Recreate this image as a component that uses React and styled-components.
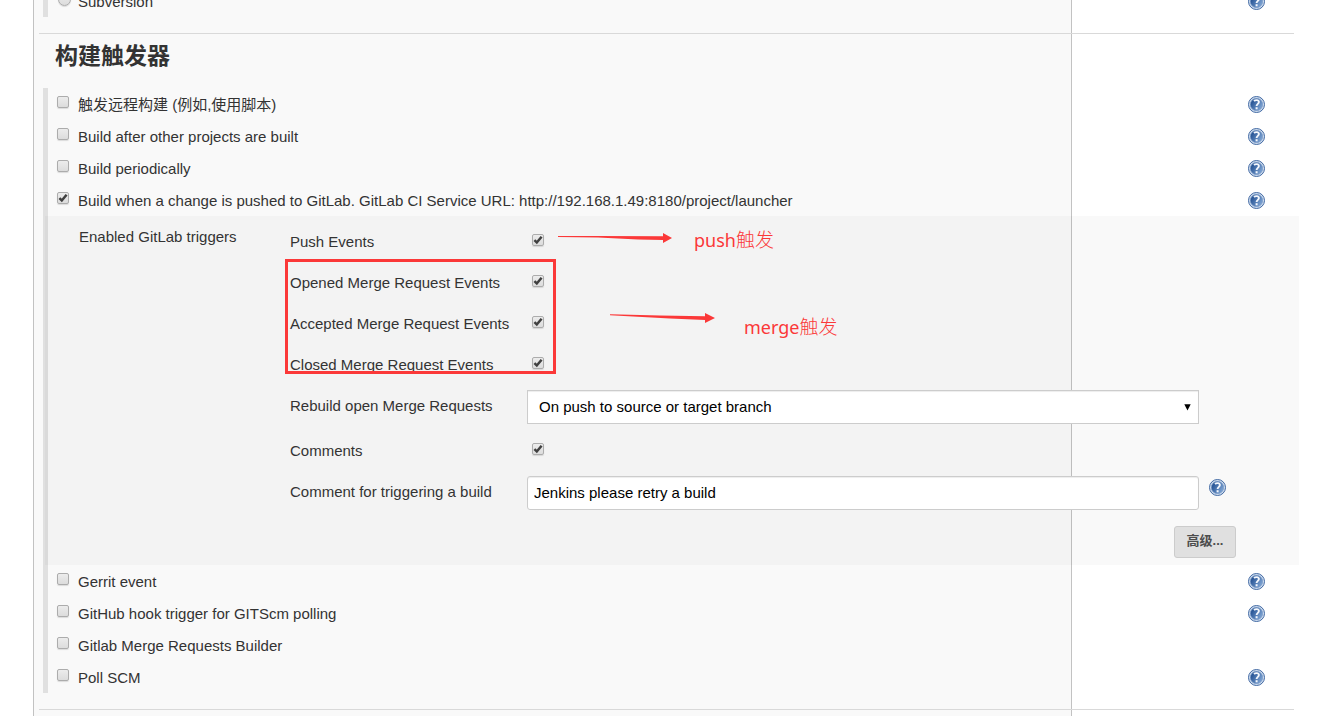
import React from "react";
import styled, { createGlobalStyle, css } from "styled-components";

const GlobalStyle = createGlobalStyle`
  *, *::before, *::after { box-sizing: border-box; }
  body {
    margin: 0;
    background: #fff;
    color: #333;
    font-family: "Liberation Sans", Arial, "Noto Sans CJK SC", sans-serif;
    font-size: 15px;
    line-height: 20px;
  }
`;

const Page = styled.div`
  display: flow-root;
  height: 100vh;
  overflow: hidden;
`;

const Panel = styled.main`
  display: flow-root;
  min-height: 100vh;
  margin: 0 247px 0 33px;
  border: solid #c2c2c2;
  border-width: 0 1px;
  background: #f9f9f9;
`;

/* The form is wider than the panel and runs out over its right border. */
const Form = styled.form`
  margin: -15px -223px 0 5px;
`;

const Divider = styled.hr`
  height: 1px;
  margin: 16px 0 0;
  border: 0;
  background: #d9d9d9;
`;

const Heading = styled.h2`
  margin: 0;
  padding: 6px 0 16px 16px;
  font-size: 23px;
  line-height: 32px;
  font-weight: 700;
`;

const Group = styled.div`
  margin-left: 4px;
  border-left: 5px solid #e0e0e0;
`;

const OptionRow = styled.div`
  display: flex;
  align-items: flex-start;
  height: 32px;
  padding: 8px 29px 0 9px;
`;

const OptionLabel = styled.label`
  flex: 1;
  margin-left: 9px;
  line-height: 18px;
`;

const BoxWrap = styled.span`
  position: relative;
  display: block;
  width: 12px;
  height: 12px;
`;

const toggle = css`
  appearance: none;
  display: block;
  width: 12px;
  height: 12px;
  margin: 0;
  border: 1px solid #acacac;
  background: linear-gradient(#ececec, #dcdcdc);
  box-shadow: 0 1px 1px rgba(0, 0, 0, 0.12);
`;

const Box = styled.input.attrs({ type: "checkbox" })`
  ${toggle}
  border-radius: 2px;
  &:not(:checked) + svg { display: none; }
`;

const Radio = styled.input.attrs({ type: "radio" })`
  ${toggle}
  width: 13px;
  height: 13px;
  margin-left: 1px;
  border-radius: 50%;
`;

const Tick = styled.svg`
  position: absolute;
  inset: 0;
  pointer-events: none;
`;

const HelpLink = styled.a`
  display: block;
  width: 17px;
  height: 17px;
  svg { display: block; }
`;

const Nested = styled.div`
  position: relative;
  display: grid;
  grid-template-columns: 245px 1fr;
  margin: 0 -5px 0 -3px;
  padding-bottom: 7px;
  background: rgba(0, 0, 0, 0.024);
`;

const NestedTitle = styled.div`
  padding: 11px 0 0 34px;
`;

const Settings = styled.div`
  padding-top: 5px;
`;

const Setting = styled.div`
  display: grid;
  grid-template-columns: 237px 1fr 100px;
  align-items: start;
  min-height: 41px;
  padding: 5px 0 ${(p) => (p.$field ? "6px" : "0")};
`;

const SettingLabel = styled.label`
  padding-top: 6px;
`;

const ToggleCell = styled.div`
  padding: 8px 0 0 5px;
`;

const HelpCell = styled.div`
  padding: 3px 0 0 10px;
`;

const Marked = styled.div`
  position: relative;
  &::after {
    content: "";
    position: absolute;
    top: -3px;
    left: -5px;
    width: 271px;
    height: 115px;
    border: 3px solid #fb3838;
    pointer-events: none;
  }
`;

const field = css`
  width: 100%;
  height: 34px;
  margin: 0;
  border: 1px solid #ccc;
  background: #fff;
  box-shadow: inset 0 1px 1px rgba(0, 0, 0, 0.075);
  color: #000;
  font: inherit;
`;

const TextField = styled.input.attrs({ type: "text" })`
  ${field}
  padding: 5px 6px 7px;
  border-radius: 3px;
`;

const SelectWrap = styled.div`
  position: relative;
`;

const Select = styled.select`
  ${field}
  appearance: none;
  padding: 0 30px 0 11px;
  border-radius: 0;
`;

const Caret = styled.svg`
  position: absolute;
  top: 14px;
  right: 8px;
  pointer-events: none;
`;

const Actions = styled.div`
  display: flex;
  justify-content: flex-end;
  margin-top: 10px;
  padding-right: 63px;
`;

const Button = styled.button`
  min-width: 62px;
  height: 32px;
  padding: 0 11px 2px;
  border: 1px solid #ccc;
  border-radius: 3px;
  background: #e0e0e0;
  color: #4d4d4d;
  font: inherit;
  font-size: 13px;
  font-weight: 700;
`;

const Arrow = styled.svg`
  position: absolute;
  top: ${(p) => p.$top}px;
  left: ${(p) => p.$left}px;
  fill: #fb3838;
`;

const Note = styled.span`
  position: absolute;
  top: ${(p) => p.$top}px;
  left: ${(p) => p.$left}px;
  color: #fb3838;
  font-family: "Noto Sans", "Noto Sans CJK SC", sans-serif;
  font-size: 18px;
  line-height: 28px;
  white-space: nowrap;
`;

const NoteHan = styled.span`
  font-family: "Noto Sans CJK SC", sans-serif;
  font-size: 19px;
  font-weight: 300;
`;

function HelpIcon() {
  return (
    <svg width="17" height="17" viewBox="0 0 17 17" aria-hidden="true">
      <defs>
        <linearGradient id="help-fill" x1="0" y1="0.2" x2="1" y2="0.8">
          <stop offset="0.15" stopColor="#2a5797" />
          <stop offset="1" stopColor="#86abd9" />
        </linearGradient>
      </defs>
      <circle cx="8.5" cy="8.5" r="8" fill="#d3e0f0" stroke="#4068a3" />
      <circle cx="8.5" cy="8.5" r="6.2" fill="url(#help-fill)" stroke="#7c9cc9" strokeWidth="0.7" />
      <path d="M6 5C7.3 3.7 10.9 3.7 10.9 6.1C10.9 7.8 8.6 8 8.6 10.1" fill="none" stroke="#f4f7fc" strokeWidth="1.9" />
      <rect x="7.6" y="11.2" width="2" height="2.1" fill="#f4f7fc" />
    </svg>
  );
}

function Help({ topic }) {
  return (
    <HelpLink href="#help" aria-label={`Help: ${topic}`}>
      <HelpIcon />
    </HelpLink>
  );
}

function Checkbox({ id, checked }) {
  return (
    <BoxWrap>
      <Box id={id} defaultChecked={checked} />
      <Tick width="12" height="12" viewBox="0 0 12 12" aria-hidden="true">
        <path d="M2.4 6.2L4.8 8.5L9.6 2.8" fill="none" stroke="#404040" strokeWidth="2.5" />
      </Tick>
    </BoxWrap>
  );
}

function Option({ id, label, checked, help }) {
  return (
    <OptionRow>
      <Checkbox id={id} checked={checked} />
      <OptionLabel htmlFor={id}>{label}</OptionLabel>
      {help && <Help topic={label} />}
    </OptionRow>
  );
}

function ToggleSetting({ id, label }) {
  return (
    <Setting>
      <SettingLabel htmlFor={id}>{label}</SettingLabel>
      <ToggleCell>
        <Checkbox id={id} checked />
      </ToggleCell>
    </Setting>
  );
}

export default function App() {
  return (
    <Page>
      <GlobalStyle />
      <Panel>
        <Form>
          <Group>
            <OptionRow>
              <BoxWrap>
                <Radio id="scm-svn" name="scm" />
              </BoxWrap>
              <OptionLabel htmlFor="scm-svn">Subversion</OptionLabel>
              <Help topic="Subversion" />
            </OptionRow>
          </Group>
          <Divider />
          <Heading>构建触发器</Heading>
          <Group>
            <Option id="remote" label="触发远程构建 (例如,使用脚本)" help />
            <Option id="after" label="Build after other projects are built" help />
            <Option id="periodic" label="Build periodically" help />
            <Option
              id="gitlab"
              label="Build when a change is pushed to GitLab. GitLab CI Service URL: http://192.168.1.49:8180/project/launcher"
              checked
              help
            />
            <Nested>
              <NestedTitle>Enabled GitLab triggers</NestedTitle>
              <Settings>
                <ToggleSetting id="push" label="Push Events" />
                <Marked>
                  <ToggleSetting id="opened" label="Opened Merge Request Events" />
                  <ToggleSetting id="accepted" label="Accepted Merge Request Events" />
                  <ToggleSetting id="closed" label="Closed Merge Request Events" />
                </Marked>
                <Setting $field>
                  <SettingLabel htmlFor="rebuild">Rebuild open Merge Requests</SettingLabel>
                  <SelectWrap>
                    <Select id="rebuild">
                      <option>On push to source or target branch</option>
                    </Select>
                    <Caret width="7" height="7" viewBox="0 0 7 7" aria-hidden="true">
                      <path d="M0.3 0.3H6.7L3.5 6.5Z" />
                    </Caret>
                  </SelectWrap>
                </Setting>
                <ToggleSetting id="comments" label="Comments" />
                <Setting $field>
                  <SettingLabel htmlFor="retry">Comment for triggering a build</SettingLabel>
                  <TextField id="retry" defaultValue="Jenkins please retry a build" />
                  <HelpCell>
                    <Help topic="Comment for triggering a build" />
                  </HelpCell>
                </Setting>
                <Actions>
                  <Button type="button">高级...</Button>
                </Actions>
              </Settings>
              <Arrow $top={16} $left={513} width="115" height="12" viewBox="0 0 115 12" aria-hidden="true">
                <path d="M0 4H40L105 4.2V1L114 6L105 11V8L80 7.4L40 5.6L0 5Z" />
              </Arrow>
              <Note $top={9} $left={649}>
                push<NoteHan>触发</NoteHan>
              </Note>
              <Arrow $top={97} $left={565} width="106" height="12" viewBox="0 0 106 12" aria-hidden="true">
                <path d="M0 1.2L50 2.5L95 3.2V0L105 5L95 10V7L60 5.4L0 2.2Z" />
              </Arrow>
              <Note $top={96} $left={699}>
                merge<NoteHan>触发</NoteHan>
              </Note>
            </Nested>
            <Option id="gerrit" label="Gerrit event" help />
            <Option id="github" label="GitHub hook trigger for GITScm polling" help />
            <Option id="glmr" label="Gitlab Merge Requests Builder" />
            <Option id="poll" label="Poll SCM" help />
          </Group>
          <Divider />
        </Form>
      </Panel>
    </Page>
  );
}
